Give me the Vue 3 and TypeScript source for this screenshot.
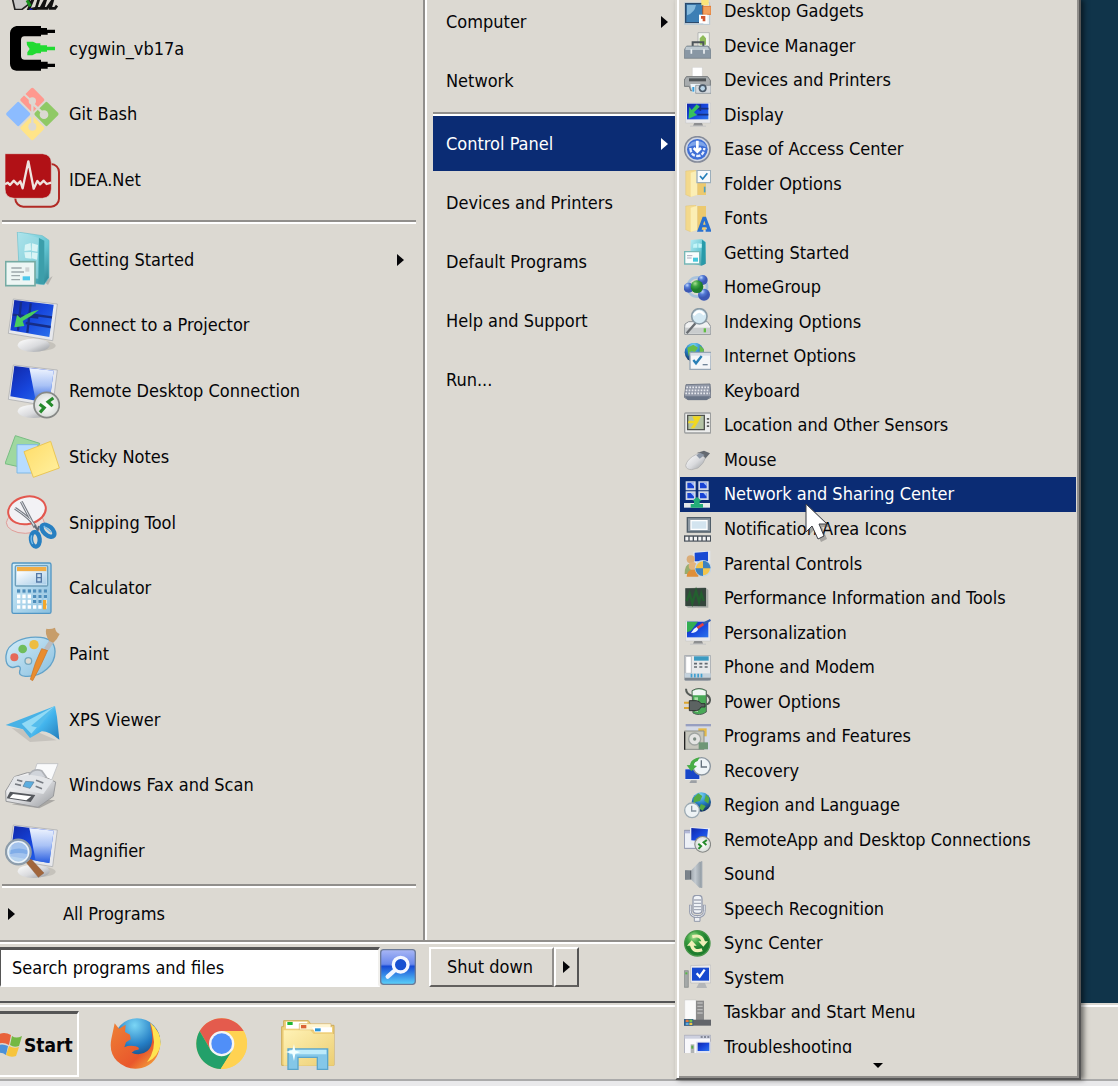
<script setup lang="ts">
interface MenuItem {
  label: string
  art?: string
  arrow?: boolean
  active?: boolean
}

const monitor = `<ellipse cx="98" cy="143" rx="54" ry="16" fill="#a9a6a0" opacity=".45"/><ellipse cx="86" cy="142" rx="48" ry="20" fill="url(#silver)"/><path d="M25 3 157 18 143 128 10 106Z" fill="#e7e8ec" stroke="#a3a4a8" stroke-width="2"/><path d="M28 6 146 20 133 117 16 97Z" fill="url(#screen)"/>`
const glare = `<path d="M73 12 146 20 133 117 92 110Z" fill="url(#glare)"/>`
const smallMonitor = `<path d="M5 6H79V66H5Z" fill="#e9e9eb" stroke="#b6b6b8"/><path d="M9 8H73V55H9Z" fill="url(#screen)"/><path d="M31 66H54L57 74H27Z" fill="#8d8e90"/><path d="M18 74H66V77H18Z" fill="#c5c5c5"/>`
const smallFolder = `<path d="M5 3 35 0V75L19 80 5 74Z" fill="#f3d98c" stroke="#dcbd6c"/><path d="M20 8 40 2V75L20 81Z" fill="#fbeeb4"/><path d="M40 3H66V75H40Z" fill="#ecc96e"/>`
const rdp = (x: number, y: number, r: number): string =>
  `<g transform="translate(${x} ${y}) scale(${r / 38})"><circle r="36" fill="url(#badge)" stroke="#868886" stroke-width="5"/><path d="M-20-2-7 8-19 21M19-20 4-9 17 3" fill="none" stroke="#258a2c" stroke-width="9"/></g>`

const pinned: MenuItem[] = [
  {
    label: '',
    art: `<path d="M22 130 55 120 78 142 50 164H30Z" fill="#c8c8c8" stroke="#222" stroke-width="5"/><path d="M60 130 86 128 70 165 95 160" fill="none" stroke="#161616" stroke-width="9"/><path d="M66 136 76 154" stroke="#16911c" stroke-width="9"/><path d="M74 162 92 176" stroke="#1920b8" stroke-width="8"/><path d="M103 128 93 160 107 160 124 128M124 128 114 160H126L148 128M145 130 136 160H150L156 152" fill="none" stroke="#111" stroke-width="8"/>`,
  },
  {
    label: 'cygwin_vb17a',
    art: `<path d="M34 15H108V21H126V26H150V36H128V41H108V46H58Q48 46 48 58V105Q48 116 59 116H108V122H128V128H150V138H128V143H108V149H34Q15 146 15 128V36Q16 20 34 15Z" fill="#000"/><path d="M65 62H84L94 67H106V73H126V77H150V88H126V92H108V97H94L82 103H67V94L74 84 66 72Z" fill="#21db32"/>`,
  },
  {
    label: 'Git Bash',
    art: `<g transform="translate(82 81) rotate(45)"><rect x="-57" y="-57" width="54" height="54" rx="5" fill="#ff998f"/><rect x="3" y="-57" width="54" height="54" rx="5" fill="#8fc965"/><rect x="-57" y="3" width="54" height="54" rx="5" fill="#8cbcff"/><rect x="3" y="3" width="54" height="54" rx="5" fill="#ffe488"/></g><path d="M56 20 82 44" stroke="#dcd9d2" stroke-width="6"/><path d="M82 40V118M82 49 118 82" stroke="#dcd9d2" stroke-width="7"/><circle cx="82" cy="42" r="11" fill="#dcd9d2"/><circle cx="82" cy="119" r="12" fill="#dcd9d2"/><circle cx="117" cy="83" r="13" fill="#dcd9d2"/>`,
  },
  {
    label: 'IDEA.Net',
    art: `<rect x="31" y="33" width="131" height="128" rx="24" fill="#dcd9d2" stroke="#b12b26" stroke-width="6"/><path d="M0 2H112Q138 4 139 28V108Q138 134 112 136H27Q0 134 0 108Z" fill="#b11116" stroke="#dcd9d2" stroke-width="2"/><path d="M0 94 8 89 15 96 26 83 37 94 46 85 53 106 70 25 86 107 97 84 105 94 116 83 125 93 139 89" fill="none" stroke="#eee4df" stroke-width="7" stroke-linejoin="round"/>`,
  },
]

const recent: MenuItem[] = [
  {
    label: 'Getting Started',
    arrow: true,
    art: `<path d="M118 150 143 132 129 159Z" fill="#b6b3ae"/><path d="M37 0 112 11 132 25V137L117 158 44 149Z" fill="url(#teal)" stroke="#69bdca" stroke-width="2"/><path d="M39 2 100 17V140L44 134Z" fill="#a4dce5" opacity=".6"/><path d="M102 18 118 26V156H101Z" fill="#3c9eaa"/><path d="m60 38 17-5 1 22-20 2Zm21-4 18 5-2 20-17-3ZM58 61l20-1 1 20-18-2Zm23 0 17 2-2 20-16-4Z" fill="#d9f4f5"/><rect x="2" y="89" width="88" height="72" fill="#edf6f4" stroke="#75aba3" stroke-width="5"/><path d="M19 108H50M19 120H57M19 131H45M19 143H45" stroke="#9ca8aa" stroke-width="4"/><rect x="61" y="106" width="12" height="13" fill="#ced4d4"/><rect x="53" y="133" width="22" height="12" fill="#4dc8eb"/>`,
  },
  {
    label: 'Connect to a Projector',
    art: `${monitor}<path d="M48 12 39 98M77 16 67 104M67 48 141 58M62 75 137 87M23 50 100 59" stroke="#162d87" stroke-width="7"/><path d="M102 35Q78 56 53 69L58 84 28 88 36 51 46 60Q68 43 102 35Z" fill="#48ce5e"/>`,
  },
  { label: 'Remote Desktop Connection', art: `${monitor}${glare}${rdp(125, 123, 40)}` },
  {
    label: 'Sticky Notes',
    art: `<path d="M31 20 104 43 76 121 0 104Z" fill="#9fd8a0" stroke="#78bd82" stroke-width="3"/><path d="M36 47H98V132H36Z" fill="#b7dcff" stroke="#7eb9e5" stroke-width="3"/><path d="M57 68 137 37 163 117 85 145Z" fill="url(#note)" stroke="#e9c657" stroke-width="3"/>`,
  },
  {
    label: 'Snipping Tool',
    art: `<ellipse cx="61" cy="83" rx="57" ry="32" fill="#e8dcda" stroke="#df9d98" stroke-width="3"/><ellipse cx="66" cy="46" rx="57" ry="41" transform="rotate(-12 66 46)" fill="#f2f2f5" stroke="#e3574e" stroke-width="6"/><path d="M30 40Q78 71 92 96M49 20Q72 64 90 98" fill="none" stroke="#777b83" stroke-width="9"/><path d="M30 40Q78 71 92 96M49 20Q72 64 90 98" fill="none" stroke="#dfe3e8" stroke-width="3"/><path d="M88 91 98 105 102 93" fill="none" stroke="#616a77" stroke-width="6"/><ellipse cx="91" cy="133" rx="13" ry="22" transform="rotate(-6 91 133)" fill="none" stroke="#277fc1" stroke-width="13"/><ellipse cx="129" cy="107" rx="13" ry="23" transform="rotate(-48 129 107)" fill="none" stroke="#277fc1" stroke-width="13"/><path d="M80 121Q76 135 83 147M116 93 138 112" fill="none" stroke="#75bdec" stroke-width="4"/>`,
  },
  {
    label: 'Calculator',
    art: `<rect x="21" y="6" width="117" height="151" rx="5" fill="url(#calc)" stroke="#5296c4" stroke-width="4"/><rect x="31" y="14" width="97" height="61" rx="3" fill="#cae3f3" stroke="#6e9fbb" stroke-width="4"/><path d="M36 18H124V31H36Z" fill="#f2ad45"/><path d="M36 31H124V70H36Z" fill="url(#paper)"/><path d="M95 38H109V63H95ZM95 50H109" fill="none" stroke="#5579a6" stroke-width="4"/><path d="M36 90H126M36 106H126M36 122H126M36 138H126" stroke="#fff" stroke-width="11" stroke-dasharray="10 6"/><path d="M36 90H126M84 106H126M84 122H110" stroke="#4d8ebc" stroke-width="10" stroke-dasharray="10 6"/><path d="M114 117H124V145H114Z" fill="#f2a72c"/>`,
  },
  {
    label: 'Paint',
    art: `<path d="M3 86C6 47 58 26 107 31Q149 36 150 72C151 112 114 151 61 148Q39 147 45 130 49 114 33 119 22 124 15 119 1 113 3 86Z" fill="url(#calc)" stroke="#63a2c8" stroke-width="4"/><circle cx="28" cy="91" r="12" fill="#e56a5b"/><circle cx="53" cy="66" r="13" fill="#6fbd5d"/><circle cx="87" cy="53" r="14" fill="#edbd40"/><circle cx="70" cy="102" r="10" fill="#dcd9d2" stroke="#77a9bf" stroke-width="4"/><path d="M110 65 128 70Q105 123 83 161L76 157Q90 103 110 65Z" fill="#e98d2f" stroke="#c9742b" stroke-width="2"/><path d="M117 64 133 40 145 47 131 70Z" fill="#b9bcc0"/><path d="M133 42Q118 20 124 5 137 8 150 2 152 16 164 21 157 37 145 47Z" fill="#c79d6a"/>`,
  },
  {
    label: 'XPS Viewer',
    art: `<path d="M20 108 89 116 155 145 75 150Z" fill="#c6c3bd"/><path d="M2 99 150 42 75 138 54 112Z" fill="#48b2e6"/><path d="M150 42 156 75 163 143Q128 116 110 118L75 138 92 93Z" fill="url(#wing)"/><path d="M50 95 150 42 79 125Z" fill="#92daf5"/><path d="M78 102 150 42 100 107Z" fill="#55bdec"/>`,
  },
  {
    label: 'Windows Fax and Scan',
    art: `<path d="M20 139 103 151 151 127 111 124Z" fill="#aaa8a4"/><path d="M96 17 159 17 138 71 80 66Z" fill="#f9fafb" stroke="#b4b7bc" stroke-width="2"/><path d="M28 56 67 44 97 46 152 72 145 115 99 148 3 130 2 99Z" fill="url(#silver)" stroke="#98999b" stroke-width="3"/><path d="M28 56 72 50 145 66 115 108 12 88Z" fill="#e3e5e8"/><path d="M72 50Q86 30 110 38L124 58" fill="#d0d4da" stroke="#aeb1b6" stroke-width="5"/><path d="M62 70 87 72 75 91 54 85Z" fill="#5baddf" stroke="#597d99" stroke-width="2"/><path d="M36 66 52 70M30 78 48 82M93 67 115 75M92 85 111 92" stroke="#777b82" stroke-width="5"/><path d="M15 101 91 111 77 132 5 121Z" fill="#55585d"/><path d="M24 108 79 115 64 127 14 119Z" fill="#fff"/>`,
  },
  {
    label: 'Magnifier',
    art: `${monitor}${glare}<path d="M63 115 78 105 117 147 100 160Z" fill="#a1663c" stroke="#7b4b32"/><circle cx="40" cy="84" r="37" fill="#b2d2ef" fill-opacity=".9" stroke="#8e9daa" stroke-width="7"/><circle cx="40" cy="84" r="31" fill="none" stroke="#eef4f8" stroke-width="4"/><path d="M17 78Q42 69 66 78V91Q43 83 15 91Z" fill="#80ade8"/>`,
  },
]

const places: MenuItem[][] = [
  [{ label: 'Computer', arrow: true }, { label: 'Network' }],
  [
    { label: 'Control Panel', arrow: true, active: true },
    { label: 'Devices and Printers' },
    { label: 'Default Programs' },
    { label: 'Help and Support' },
    { label: 'Run...' },
  ],
]

const controlPanel: MenuItem[] = [
  {
    label: 'Desktop Gadgets',
    art: `<path d="M2 14H77V80H2Z" fill="#eef4f6" stroke="#b7c6d0" stroke-width="3"/><path d="M5 17H56V74H5Z" fill="#3d7fb5" stroke="#2c4a6b" stroke-width="4"/><path d="M9 21H36Q32 44 9 52Z" fill="#85b9dc"/><rect x="52" y="2" width="22" height="20" fill="#fbe47a"/><rect x="57" y="25" width="24" height="24" fill="#f2a05d" stroke="#e17c38" stroke-width="3"/><rect x="45" y="50" width="25" height="26" fill="#fff"/><path d="M51 54H64V70H56V62H51Z" fill="#cf552e"/>`,
  },
  {
    label: 'Device Manager',
    art: `<path d="M42 2H76V44H42Z" fill="#f3f5ef" stroke="#9ea2a3" stroke-width="2"/><path d="M47 19 57 9 66 19V38H47Z" fill="#8fbb59"/><path d="M26 42V31H58V42" fill="none" stroke="#4d555b" stroke-width="6"/><path d="M8 42H72L81 53V79H1V53Z" fill="#8997a4" stroke="#6d7881" stroke-width="2"/><path d="M6 44H71L76 54H4Z" fill="#bec9d0"/><path d="M22 52V65M60 52V65" stroke="#edf1f3" stroke-width="5"/>`,
  },
  {
    label: 'Devices and Printers',
    art: `<path d="M25 1H55V37H25Z" fill="#fff" stroke="#bbb"/><path d="M7 29H71L79 40V58H63L58 71H20L16 58H1V39Z" fill="#a8acae" stroke="#73777a" stroke-width="3"/><path d="M15 34H66V43H15Z" fill="#4e5356"/><path d="M19 51H49V76H25Z" fill="#eef5fa"/><path d="M35 55H81V79H35Z" fill="#d6dade" stroke="#7f888e" stroke-width="2"/><circle cx="56" cy="64" r="12" fill="#4a5968"/><circle cx="56" cy="64" r="7" fill="#b9d4e7"/><path d="M28 60V74" stroke="#3a9edb" stroke-width="6"/>`,
  },
  { label: 'Display', art: `${smallMonitor}<path d="M49 10V30M40 23H73M40 41H73" stroke="#173081" stroke-width="5"/><path d="M38 10 47 17 30 34 39 42 14 53 16 18 23 27Z" fill="#37c15b"/>` },
  {
    label: 'Ease of Access Center',
    art: `<circle cx="40" cy="40" r="38" fill="#d3d8e3" stroke="#858b99" stroke-width="5"/><circle cx="40" cy="40" r="31" fill="#3f6fd6"/><path d="M12 34A30 30 0 0 1 68 34Q40 22 12 34Z" fill="#7fa5ea"/><path d="M40 14V46M29 36 40 47 51 36" fill="none" stroke="#fff" stroke-width="8"/><path d="M19 36Q21 60 40 60T61 36" fill="none" stroke="#e8efff" stroke-width="7" stroke-dasharray="12 4"/>`,
  },
  { label: 'Folder Options', art: `${smallFolder}<path d="M39 1H80V38H39Z" fill="#f7fafc" stroke="#9baebb" stroke-width="4"/><path d="m48 18 8 9 14-17" fill="none" stroke="#247fba" stroke-width="5"/><path d="M62 50V67" stroke="#4d9fc5" stroke-width="5"/>` },
  { label: 'Fonts', art: `${smallFolder}<path d="M39 80 56 35H66L81 75V80H65V73H69L67 67H55L53 74H58V80ZM57 59H65L61 47Z" fill="#2870d0" fill-rule="evenodd"/>` },
  {
    label: 'Getting Started',
    art: `<path d="M20 3 54 0 65 9V74L53 80 19 73Z" fill="url(#teal)"/><path d="M28 16 40 13V26H27ZM43 13 54 15V26H43Z" fill="#c3f5f8"/><path d="M54 2 64 10V74L52 79Z" fill="#299aa9"/><path d="M2 38H47V75H2Z" fill="#f8fdfd" stroke="#75b7b6" stroke-width="4"/><path d="M9 50H25M9 57H23" stroke="#aab" stroke-width="3"/><path d="M27 56H42V68H27Z" fill="#44c8dc"/>`,
  },
  {
    label: 'HomeGroup',
    art: `<circle cx="40" cy="39" r="29" fill="none" stroke="#a9c3dc" stroke-width="8"/><circle cx="56" cy="18" r="15" fill="url(#blueball)"/><circle cx="14" cy="41" r="15" fill="url(#blueball)"/><circle cx="60" cy="62" r="18" fill="url(#blueball)"/><circle cx="39" cy="38" r="19" fill="url(#greenball)"/>`,
  },
  {
    label: 'Indexing Options',
    art: `<path d="M3 48 14 41H70L80 55V79H2V56Z" fill="#f0f1f1" stroke="#8e9296" stroke-width="3"/><path d="M3 59H79V77H3Z" fill="#c9cccd"/><path d="M59 61H66V73H59Z" fill="#61bd42"/><path d="M35 45 8 76" stroke="#696d71" stroke-width="7"/><circle cx="46" cy="25" r="23" fill="#d4e9f3" stroke="#8a9ba6" stroke-width="5"/><path d="M29 22Q45 0 61 20" fill="none" stroke="#fff" stroke-width="7"/>`,
  },
  {
    label: 'Internet Options',
    art: `<circle cx="31" cy="28" r="29" fill="url(#globe)"/><path d="M10 14 28 5 42 14 33 27 21 25 14 40ZM47 7 60 19 57 37 47 27Z" fill="#68bd49"/><path d="M18 28H81V79H18Z" fill="#f4f6f8" stroke="#96a6b5" stroke-width="4"/><path d="M20 30H79V38H20Z" fill="#d9dee7"/><path d="m28 51 8 10 17-22" fill="none" stroke="#287fb6" stroke-width="7"/><path d="M56 65H71" stroke="#718498" stroke-width="4"/>`,
  },
  {
    label: 'Keyboard',
    art: `<path d="M6 23 78 21 81 61 67 68H12L1 61Z" fill="#9299a8" stroke="#747b89" stroke-width="3"/><path d="M7 31H76M5 40H77M4 49H78" stroke="#e6e8ed" stroke-width="5" stroke-dasharray="5 4"/><path d="M2 58H79L68 69H12Z" fill="#697487"/>`,
  },
  {
    label: 'Location and Other Sensors',
    art: `<rect x="2" y="3" width="78" height="60" rx="3" fill="#ecedec" stroke="#9c9e9e" stroke-width="4"/><path d="M11 10H61V53H11Z" fill="#b4c3a4" stroke="#50534e" stroke-width="4"/><path d="M14 26H31L25 13H51L44 28 31 49 20 49 30 34H12Z" fill="#f0d820"/><path d="M72 18V47" stroke="#5b5d5c" stroke-width="7" stroke-dasharray="5 6"/>`,
  },
  {
    label: 'Mouse',
    art: `<path d="M40 20 60 14 78 22 57 46Z" fill="#646970"/><path d="M5 58Q10 38 37 25L46 21 64 36Q60 53 42 66L23 71Q6 71 5 58Z" fill="url(#silver)" stroke="#aaa" stroke-width="2"/><path d="M37 28 47 38 62 27 48 20Z" fill="#8d97a6"/>`,
  },
  {
    label: 'Network and Sharing Center',
    active: true,
    art: `<path d="M5 1H35V28H5ZM43 1H74V28H43ZM5 31H35V57H5ZM43 31H74V57H43Z" fill="#cfd6e6"/><path d="M10 5H30V22H10ZM48 5H68V22H48ZM10 36H30V52H10ZM48 36H68V52H48Z" fill="#1742d4"/><path d="M20 5H30V16ZM58 5H68V16ZM20 36H30V47ZM58 36H68V47Z" fill="#a3bdfa"/><path d="M0 66H78V80H0Z" fill="#e4e9ea"/><path d="M20 80V69H30V59H25L39 48 53 59H47V69H57V80Z" fill="#23ad78"/>`,
  },
  {
    label: 'Notification Area Icons',
    art: `<path d="M10 8H80V51H10Z" fill="#8c98a2" stroke="#505e69" stroke-width="4"/><path d="M21 17H69V43H21Z" fill="#d3e4ef" stroke="#fff" stroke-width="4"/><path d="M0 61H81V80H0Z" fill="#49515a"/><path d="M4 71H79" stroke="#f4f4f4" stroke-width="11" stroke-dasharray="9 4"/>`,
  },
  {
    label: 'Parental Controls',
    art: `<path d="M28 5 79 2V43H28Z" fill="#e2e6ed"/><path d="M32 8 72 5V34H32Z" fill="#1749d3"/><circle cx="20" cy="28" r="12" fill="#dbad78"/><path d="M2 72Q2 42 18 41 35 41 36 72Z" fill="#97ad6f"/><circle cx="26" cy="48" r="12" fill="#e3b37c"/><path d="M8 80Q10 58 27 59 44 58 43 80Z" fill="#e08f39"/><circle cx="57" cy="55" r="23" fill="#f2c54c" stroke="#c1d5e8" stroke-width="4"/><path d="M57 32A23 23 0 0 1 80 55H57ZM34 55H57V78A23 23 0 0 1 34 55Z" fill="#3d82bf"/>`,
  },
  {
    label: 'Performance Information and Tools',
    art: `<path d="M3 10 64 7 73 15V68L12 68 3 62Z" fill="#a9aca8"/><path d="M4 10 66 9V64L4 63Z" fill="#34453c"/><path d="M8 48 17 25 25 54 36 18 45 51 52 26 59 48" fill="none" stroke="#23602f" stroke-width="7"/>`,
  },
  {
    label: 'Personalization',
    art: `${smallMonitor}<path d="M9 8H42L21 35 9 40Z" fill="#32ad52"/><path d="M21 42Q27 29 38 24L43 30Q38 42 21 42Z" fill="#eef3ff"/><path d="M38 24 56 11 61 18 43 30Z" fill="#e14443"/><path d="M56 11 78 0 81 5 61 18Z" fill="#335dad"/>`,
  },
  {
    label: 'Phone and Modem',
    art: `<path d="M1 5H80V75L74 80H5L1 74Z" fill="#e7e9eb" stroke="#a6abb0" stroke-width="3"/><path d="M5 7H22V58H5Z" fill="#fff" stroke="#999da1" stroke-width="2"/><path d="M30 7H74V20H30Z" fill="#3c9ac1"/><path d="M30 29H74M30 39H74" stroke="#626971" stroke-width="5" stroke-dasharray="9 7"/><path d="M2 58H80V71H2Z" fill="#c4d2dd"/><path d="M2 71H80V79H2Z" fill="#7b848d"/><path d="M20 65H57" stroke="#3f9fd0" stroke-width="11" stroke-dasharray="5 5"/>`,
  },
  {
    label: 'Power Options',
    art: `<path d="M6 2Q6 20 28 24M65 20Q79 24 78 38 76 50 63 49" fill="none" stroke="#555b57" stroke-width="6"/><path d="M24 8Q45-5 67 8V72Q47 86 27 75Z" fill="#49a957" stroke="#55635b" stroke-width="3"/><path d="M26 9Q44-2 65 9V22H26Z" fill="#f1f5f4"/><path d="M31 28H42V72H34Z" fill="#a8dda5"/><path d="M0 44H19M0 60H19" stroke="#dca632" stroke-width="6"/><path d="M16 38H38Q48 40 51 47H63V57H51Q48 66 38 68H16Z" fill="#5c6362" stroke="#303434" stroke-width="3"/>`,
  },
  {
    label: 'Programs and Features',
    art: `<path d="M7 5H77V80H7Z" fill="#d5dae5"/><path d="M5 3H81V10H5Z" fill="#979fc0"/><path d="M43 16H68V40H43Z" fill="#e4ba4b"/><path d="M1 24H60V79H1Z" fill="#c6c6bd" stroke="#8b8f89" stroke-width="3"/><path d="M2 26V80" stroke="#222" stroke-width="4"/><circle cx="32" cy="48" r="18" fill="#e3e4e2" stroke="#a0a5a2" stroke-width="4"/><circle cx="32" cy="48" r="5" fill="#7e8c84"/><path d="M44 58H72V79H44Z" fill="#6d9678"/>`,
  },
  {
    label: 'Recovery',
    art: `<path d="M3 36H50V69H3Z" fill="#e4e8ef"/><path d="M4 37H46V66H4Z" fill="#1746c8"/><path d="M21 70H38V78H16Z" fill="#9ca0a5"/><circle cx="53" cy="28" r="26" fill="#eff4f7" stroke="#89949e" stroke-width="4"/><path d="M52 10V30H69" fill="none" stroke="#65717d" stroke-width="4"/><path d="M47 1 41 12Q28 16 30 25L39 27 22 43 8 25 18 24Q20 6 47 1Z" fill="#47ad45"/>`,
  },
  {
    label: 'Region and Language',
    art: `<circle cx="52" cy="30" r="29" fill="url(#globe)"/><path d="M29 17 43 4 55 12 48 27 34 30 28 44ZM66 7 76 18 73 35 61 26ZM51 36 65 42 56 56 45 49Z" fill="#54aa44"/><circle cx="24" cy="55" r="22" fill="#eef3f5" stroke="#9caab3" stroke-width="4"/><path d="M23 41V57H37" fill="none" stroke="#83919c" stroke-width="4"/>`,
  },
  { label: 'RemoteApp and Desktop Connections', art: `<path d="M1 13H38V67H1Z" fill="#edf0f7" stroke="#8a91ab" stroke-width="3"/><path d="M2 15H34V22H2Z" fill="#b2b8d8"/><path d="M18 4 78 7 73 59 18 53Z" fill="#e8ebf3"/><path d="M22 6 72 10 68 47 22 43Z" fill="url(#screen)"/>${rdp(56, 55, 25)}` },
  {
    label: 'Sound',
    art: `<path d="M3 28H22L46 2H54V80H46L22 56H3Z" fill="url(#speaker)"/><path d="M5 29H20V55H5Z" fill="#7b838b"/><path d="M20 29V55" stroke="#545b63" stroke-width="3"/><path d="M53 1V80" stroke="#a0a9b1" stroke-width="4"/>`,
  },
  {
    label: 'Speech Recognition',
    art: `<path d="M31 62H48V79H31Z" fill="#eef0f4" stroke="#9299a9" stroke-width="3"/><path d="M19 29V47Q19 65 40 65T61 47V29" fill="none" stroke="#9198aa" stroke-width="8"/><path d="M19 31V47Q19 65 40 65T61 47V31" fill="none" stroke="#e6e9ef" stroke-width="3"/><rect x="27" y="1" width="27" height="54" rx="10" fill="#f0f3f7" stroke="#949bad" stroke-width="4"/><path d="M29 15H52M29 25H52M29 35H52M29 44H52" stroke="#a5abb8" stroke-width="4"/>`,
  },
  {
    label: 'Sync Center',
    art: `<circle cx="40" cy="40" r="38" fill="url(#greenball)" stroke="#469548" stroke-width="4"/><path d="M24 16Q55 6 63 34H72L58 50 43 34H52Q46 17 26 25ZM56 64Q26 75 18 47H9L23 31 38 47H29Q33 62 53 55Z" fill="#f0efb8"/>`,
  },
  {
    label: 'System',
    art: `<path d="M1 20H13V70H1Z" fill="#a4a8a7" stroke="#818583" stroke-width="2"/><path d="M4 25H10V31H4Z" fill="#58ba45"/><path d="M20 5 80 3V57H20Z" fill="#ebebee" stroke="#bbb" stroke-width="2"/><path d="M24 11H75V50H24Z" fill="#1749cf"/><path d="m38 28 9 10 15-21" fill="none" stroke="#fff" stroke-width="7"/><path d="M45 57H63L69 72H37Z" fill="#b4b6b8"/>`,
  },
  {
    label: 'Taskbar and Start Menu',
    art: `<path d="M2 3H36V65H2Z" fill="#fafafa" stroke="#bbb"/><path d="M36 5H60V65H36Z" fill="#8b8b8b"/><path d="M40 12H56M40 22H56M40 32H56M40 42H56" stroke="#bbb" stroke-width="4"/><path d="M0 62H81V80H0Z" fill="#62656a"/><path d="M0 60H28V80H0Z" fill="#315e8a"/><path d="M5 62H14V69H5Z" fill="#e37b40"/><path d="M16 62H25V69H16Z" fill="#7bc24a"/><path d="M5 71H14V78H5Z" fill="#5babdf"/><path d="M16 71H25V78H16Z" fill="#f0c548"/>`,
  },
  {
    label: 'Troubleshooting',
    art: `<path d="M1 7H80V81H1Z" fill="#f8f8fb" stroke="#a5a8b5" stroke-width="3"/><path d="M2 8H79V17H2Z" fill="#cdd0df"/><path d="M50 12H78" stroke="#6c7283" stroke-width="4" stroke-dasharray="6 4"/><path d="M20 34H31V70H20Z" fill="#b0b3b3"/><path d="M22 38H28V47H22Z" fill="#56aa45"/><path d="M36 26H80V62H36Z" fill="#dfe3ef"/><path d="M41 29H76V54H41Z" fill="url(#screen)"/>`,
  },
]

const quickLaunch: MenuItem[] = [
  {
    label: 'Firefox',
    art: `<circle cx="84" cy="74" r="70" fill="url(#globe)"/><path d="M123 17Q157 43 153 87 146 140 98 153 56 162 24 132-1 106 7 66L17 19 30 35 50 23 48 45 63 53 65 67 51 76 46 91Q61 84 80 88 94 92 88 98 77 97 68 107 93 119 115 102 134 86 129 51Z" fill="url(#fox)"/><path d="M123 17Q157 43 155 83 148 120 114 136 143 96 132 53 130 30 123 17Z" fill="#fee451"/>`,
  },
  {
    label: 'Google Chrome',
    art: `<circle cx="80" cy="80" r="76" fill="#ffd252"/><path d="M14 42A76 76 0 0 1 146 42H80L47 99Z" fill="#e45b4d"/><path d="M14 42A76 76 0 0 0 77 156L113 99 80 118 47 99Z" fill="#23a06a"/><path d="M80 42H146A76 76 0 0 1 77 156L113 99Z" fill="#ffd252"/><circle cx="80" cy="80" r="38" fill="#f5f5f5"/><circle cx="80" cy="80" r="31" fill="#508ff8"/>`,
  },
  {
    label: 'Windows Explorer',
    art: `<path d="M8 11H82L92 25H159V145H2V29H8Z" fill="#efd07b" stroke="#cdac59" stroke-width="3"/><path d="M15 14H79V35H15Z" fill="#fff"/><path d="M19 15H35V24H19Z" fill="#20b630"/><path d="M55 20H150V39H55Z" fill="#fff5d2" stroke="#d5b166" stroke-width="2"/><path d="M60 24H76V34H60Z" fill="#db6337"/><path d="M8 40H88L98 51H159V146H8Z" fill="url(#folder)"/><path d="M93 31H153V46H102Z" fill="#fff"/><path d="M102 34H119V43H102Z" fill="#2b95d6"/><path d="M21 157V96H140V157H109V121H51V157Z" fill="#84c7e8" stroke="#5aa5cb" stroke-width="4"/><path d="M25 98H136V112H25Z" fill="#bceafa"/><path d="M39 81 43 101 59 105 43 110 39 132 34 110 13 105 34 100Z" fill="#f2ffff"/>`,
  },
]
</script>

<template>
  <main class="screen">
    <svg class="defs" aria-hidden="true">
      <defs>
        <linearGradient id="silver" x1="0" y1="0" x2="1" y2="1"><stop stop-color="#ffffff" /><stop offset=".55" stop-color="#d9dadd" /><stop offset="1" stop-color="#94979b" /></linearGradient>
        <linearGradient id="screen" x1="0" y1="0" x2="1" y2="1"><stop stop-color="#1027a8" /><stop offset=".5" stop-color="#1746dd" /><stop offset="1" stop-color="#2d74ed" /></linearGradient>
        <linearGradient id="glare" x1="0" y1="0" x2="0" y2="1"><stop stop-color="#f0f5ff" /><stop offset=".5" stop-color="#a9c2f6" /><stop offset="1" stop-color="#275ce0" /></linearGradient>
        <linearGradient id="teal" x1="0" y1="0" x2="1" y2="1"><stop stop-color="#b9edf4" /><stop offset=".6" stop-color="#62c4d1" /><stop offset="1" stop-color="#28818e" /></linearGradient>
        <linearGradient id="note" x1="0" y1="0" x2="1" y2="1"><stop stop-color="#ffdc67" /><stop offset="1" stop-color="#fff1a1" /></linearGradient>
        <linearGradient id="calc" x1="0" y1="0" x2="1" y2="1"><stop stop-color="#d5eef9" /><stop offset="1" stop-color="#89bfdf" /></linearGradient>
        <linearGradient id="paper" x1="0" y1="0" x2="1" y2="1"><stop stop-color="#ffffff" /><stop offset="1" stop-color="#a9cde8" /></linearGradient>
        <linearGradient id="wing" x1="0" y1="0" x2="1" y2="1"><stop stop-color="#bceaf9" /><stop offset=".5" stop-color="#43b5ed" /><stop offset="1" stop-color="#247cba" /></linearGradient>
        <linearGradient id="folder" x1="0" y1="0" x2="1" y2="1"><stop stop-color="#fff2b5" /><stop offset="1" stop-color="#ecce73" /></linearGradient>
        <linearGradient id="speaker"><stop stop-color="#707981" /><stop offset=".6" stop-color="#c3cad0" /><stop offset="1" stop-color="#8e98a0" /></linearGradient>
        <linearGradient id="search" x1="0" y1="0" x2="0" y2="1"><stop stop-color="#a9b7f5" /><stop offset=".42" stop-color="#6988ec" /><stop offset=".48" stop-color="#174bd5" /><stop offset="1" stop-color="#5bd2fa" /></linearGradient>
        <linearGradient id="fox" x1="0" y1="0" x2="1" y2="1"><stop stop-color="#ee8135" /><stop offset=".65" stop-color="#e9572c" /><stop offset="1" stop-color="#f8bd40" /></linearGradient>
        <radialGradient id="badge"><stop stop-color="#ffffff" /><stop offset="1" stop-color="#d9ddda" /></radialGradient>
        <radialGradient id="blueball" cx=".35" cy=".25"><stop stop-color="#c1d8ff" /><stop offset=".5" stop-color="#547bd5" /><stop offset="1" stop-color="#3c58b4" /></radialGradient>
        <radialGradient id="greenball" cx=".35" cy=".25"><stop stop-color="#a8e090" /><stop offset=".5" stop-color="#3ea443" /><stop offset="1" stop-color="#1f7e2d" /></radialGradient>
        <radialGradient id="globe" cx=".45" cy=".15" r=".8"><stop stop-color="#7bd6f5" /><stop offset=".55" stop-color="#247dc4" /><stop offset="1" stop-color="#173869" /></radialGradient>
      </defs>
    </svg>

    <section class="start-menu" aria-label="Start menu">
      <div class="columns">
        <nav class="programs" aria-label="Programs">
          <div class="group pinned">
            <button v-for="(item, i) in pinned" :key="i" type="button" class="program" :aria-label="item.label || 'Cygwin'">
              <svg viewBox="0 0 165 165" v-html="item.art" />
              <span>{{ item.label }}</span>
            </button>
          </div>
          <hr />
          <div class="group recent">
            <button v-for="item in recent" :key="item.label" type="button" class="program">
              <svg viewBox="0 0 165 165" v-html="item.art" />
              <span>{{ item.label }}</span>
              <i v-if="item.arrow" class="arrow" />
            </button>
          </div>
          <hr />
          <button type="button" class="all-programs"><i class="arrow" /><span>All Programs</span></button>
        </nav>
        <nav class="places" aria-label="Places">
          <template v-for="(group, g) in places" :key="g">
            <hr v-if="g > 0" />
            <div class="place-group">
              <button v-for="item in group" :key="item.label" type="button" class="place" :class="{ active: item.active }">
                <span>{{ item.label }}</span>
                <i v-if="item.arrow" class="arrow" />
              </button>
            </div>
          </template>
        </nav>
      </div>
      <div class="footer">
        <form class="search" @submit.prevent>
          <input type="text" aria-label="Search programs and files" placeholder="Search programs and files" />
          <button type="submit" aria-label="Search">
            <svg viewBox="0 0 108 108"><rect x="2" y="2" width="104" height="104" rx="9" fill="url(#search)" stroke="#6c7b98" stroke-width="4" /><path d="M49 60 23 83" stroke="#eef4ff" stroke-width="13" stroke-linecap="round" /><circle cx="62" cy="47" r="22" fill="#1750d1" stroke="#f4f7ff" stroke-width="10" /></svg>
          </button>
        </form>
        <div class="power">
          <button type="button" class="shutdown">Shut down</button>
          <button type="button" class="more" aria-label="More power options"><i class="arrow" /></button>
        </div>
      </div>
    </section>

    <footer class="taskbar">
      <button type="button" class="start">
        <svg viewBox="0 0 22 24"><path d="M-3 2Q4-2 11 2L9 12Q2 8-4 12Z" fill="#e8623a" /><path d="M12 3Q16 6 22 3L19 13Q14 15 10 12Z" fill="#73b843" /><path d="M-4 13Q2 10 8 13L6 22Q1 18-5 21Z" fill="#4b91d8" /><path d="M9 13Q14 16 19 14L16 23Q11 25 6 22Z" fill="#f6c43c" /></svg>
        <span>Start</span>
      </button>
      <button v-for="app in quickLaunch" :key="app.label" type="button" class="launch" :aria-label="app.label">
        <svg viewBox="0 0 162 162" v-html="app.art" />
      </button>
    </footer>

    <nav class="submenu" aria-label="Control Panel">
      <div class="viewport">
        <div class="entries">
          <button v-for="item in controlPanel" :key="item.label" type="button" class="entry" :class="{ active: item.active }">
            <svg viewBox="0 0 81 81" v-html="item.art" />
            <span>{{ item.label }}</span>
            <svg v-if="item.active" class="pointer" viewBox="0 0 26 40"><path d="M2 1V30L8 24 14 37 20 34 15 22H24Z" fill="#555" opacity=".4" transform="translate(2 2)" /><path d="M1 1V29L7 23 13 36 19 33 14 21H22Z" fill="#fff" stroke="#3b3d44" stroke-width="1" /></svg>
          </button>
        </div>
      </div>
      <button type="button" class="scroll-down" aria-label="Scroll down"><i /></button>
    </nav>
  </main>
</template>

<style>
body {
  margin: 0;
}
</style>

<style scoped>
.screen {
  position: relative;
  display: flex;
  flex-direction: column;
  height: 100vh;
  overflow: hidden;
  background: #10344a;
  color: #050508;
  font-family: "DejaVu Sans Condensed", "DejaVu Sans", sans-serif;
  font-size: 18px;
  line-height: 24px;
}

.defs {
  position: absolute;
  width: 0;
  height: 0;
}

button,
input {
  box-sizing: border-box;
  margin: 0;
  padding: 0;
  border: 0;
  border-radius: 0;
  background: none;
  color: inherit;
  font: inherit;
  text-align: left;
  white-space: nowrap;
}

svg {
  display: block;
  flex: none;
}

hr {
  box-sizing: border-box;
  flex: none;
  width: 100%;
  height: 4px;
  margin: 0;
  border: 0;
  border-top: 2px solid #918f8c;
  border-bottom: 2px solid #fff;
}

.arrow {
  flex: none;
  width: 0;
  height: 0;
  border-top: 6px solid transparent;
  border-bottom: 6px solid transparent;
  border-left: 7px solid currentColor;
}

.start-menu {
  display: flex;
  flex: 1;
  flex-direction: column;
  min-height: 0;
  width: calc(100% - 443px);
  box-sizing: border-box;
  overflow: hidden;
  background: #dcd9d2;
  border-bottom: 2px solid #555;
}

.columns,
.footer {
  display: grid;
  grid-template-columns: 425fr 250fr;
}

.columns {
  flex: 1;
  min-height: 0;
}

.programs {
  display: flex;
  flex-direction: column;
  margin-top: -50px;
  padding: 0 7px 0 2px;
  border-right: 2px solid #918f8c;
}

.group {
  display: flex;
  flex-direction: column;
  min-height: 0;
}

.pinned {
  flex: 4 1 0;
  margin-bottom: 7px;
}

.recent {
  flex: 10 1 0;
  margin-top: 3px;
}

.program {
  display: flex;
  flex: 1 1 0;
  align-items: center;
  gap: 9px;
  min-height: 0;
  padding: 0 12px 0 3px;
}

.program svg {
  width: 55px;
  height: 55px;
}

.program .arrow,
.place .arrow {
  margin-left: auto;
}

.all-programs {
  display: flex;
  flex: none;
  align-items: center;
  gap: 48px;
  height: 52px;
  padding-left: 6px;
}

.places {
  padding-left: 6px;
  border-left: 2px solid #fff;
  margin-top: -6px;
}

.place-group {
  display: grid;
  gap: 4px;
}

.places hr {
  margin-top: 4px;
}

.place {
  display: flex;
  align-items: center;
  height: 55px;
  padding: 0 7px 0 13px;
}

.active {
  background: #0b2c74;
  color: #fff;
}

.footer {
  align-items: start;
  height: 61px;
  padding-top: 5px;
  box-sizing: border-box;
  border-top: 2px solid #918f8c;
  box-shadow: inset 0 2px #fff;
}

.search {
  display: flex;
  align-items: center;
  padding-right: 9px;
}

.search input {
  flex: 1;
  min-width: 0;
  height: 40px;
  padding: 0 0 0 11px;
  border: 2px solid #fff;
  border-top: 3px solid #555;
  border-left: 1px solid #555;
  border-right-color: #f1f0ed;
  background: #fff;
}

.search input::placeholder {
  color: #050508;
  opacity: 1;
}

.search svg {
  width: 36px;
  height: 36px;
}

.power {
  display: flex;
  margin-left: 4px;
}

.power button {
  height: 40px;
  border: 2px solid #fff;
  border-right-color: #918f8c;
  border-bottom-color: #62605e;
}

.shutdown {
  width: 125px;
  padding-left: 16px;
}

.more {
  display: flex;
  align-items: center;
  justify-content: center;
  width: 25px;
}

.power .more {
  border-right-color: #555;
}

.taskbar {
  display: flex;
  flex: none;
  align-items: center;
  height: 83px;
  box-sizing: border-box;
  padding: 5px 0 4px;
  border-top: 2px solid #dcd9d2;
  border-bottom: 5px solid #e9e9eb;
  background: #dcd9d2;
  box-shadow: inset 0 2px #fff, inset 0 -2px #aaa;
}

.start {
  display: flex;
  align-items: center;
  gap: 2px;
  width: 79px;
  height: 66px;
  margin-right: 30px;
  padding-top: 2px;
  border-top: 3px solid #555;
  border-right: 2px solid #fff;
  border-bottom: 2px solid #fff;
  font-size: 19px;
  font-weight: bold;
}

.start svg {
  width: 22px;
  height: 24px;
}

.launch {
  margin-right: 32px;
}

.launch svg {
  width: 54px;
  height: 54px;
}

.submenu {
  position: absolute;
  top: 0;
  right: 37px;
  bottom: 6px;
  display: flex;
  flex-direction: column;
  box-sizing: border-box;
  width: 406px;
  padding: 0 1px;
  background: #dcd9d2;
  border-left: 2px solid #dcd9d2;
  border-right: 2px solid #555;
  border-bottom: 2px solid #555;
  box-shadow: inset 2px 0 #fff, inset -2px -2px #918f8c, 3px 0 5px rgb(0 0 0 / 50%);
}

.viewport {
  display: flex;
  flex: 1;
  flex-direction: column;
  min-height: 0;
  overflow: hidden;
  padding: 0 2px;
}

.entries {
  display: flex;
  flex: 1;
  flex-direction: column;
  margin: -6px 0 -11px;
}

.entry {
  position: relative;
  display: flex;
  flex: 1 1 0;
  align-items: center;
  gap: 13px;
  min-height: 0;
  padding-left: 4px;
}

.entry > svg {
  width: 27px;
  height: 27px;
}

.entry > .pointer {
  position: absolute;
  top: 26px;
  left: 125px;
  z-index: 1;
  width: 26px;
  height: 40px;
}

.scroll-down {
  display: flex;
  flex: none;
  align-items: center;
  justify-content: center;
  height: 25px;
}

.scroll-down i {
  border-top: 5px solid #000;
  border-left: 5px solid transparent;
  border-right: 5px solid transparent;
}
</style>
